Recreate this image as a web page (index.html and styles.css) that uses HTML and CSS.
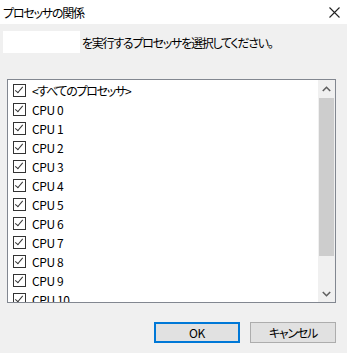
FILE: index.html
```html
<!DOCTYPE html>
<html lang="ja">
  <head>
    <meta charset="UTF-8" />
    <title>プロセッサの関係</title>
    <link rel="stylesheet" href="styles.css">
  </head>
  <body>
    <div class="dialog">
      <div class="title_bar">
        <span class="title">プロセッサの関係</span>
        <span class="close_btn">
          <svg width="11" height="11" viewBox="0 0 11 11"><path d="M0.5 0.5 L10.5 10.5 M10.5 0.5 L0.5 10.5" stroke="#222" stroke-width="1.1" fill="none"/></svg>
        </span>
      </div>

      <div class="prompt_row">
        <div class="name_box"></div>
        <span class="prompt_text">を実行するプロセッサを選択してください。</span>
      </div>

      <div class="list_box">
        <div class="list_items">
          <div class="list_item all_item"><span class="check_box"></span>&lt;すべてのプロセッサ&gt;</div>
          <div class="list_item"><span class="check_box"></span>CPU 0</div>
          <div class="list_item"><span class="check_box"></span>CPU 1</div>
          <div class="list_item"><span class="check_box"></span>CPU 2</div>
          <div class="list_item"><span class="check_box"></span>CPU 3</div>
          <div class="list_item"><span class="check_box"></span>CPU 4</div>
          <div class="list_item"><span class="check_box"></span>CPU 5</div>
          <div class="list_item"><span class="check_box"></span>CPU 6</div>
          <div class="list_item"><span class="check_box"></span>CPU 7</div>
          <div class="list_item"><span class="check_box"></span>CPU 8</div>
          <div class="list_item"><span class="check_box"></span>CPU 9</div>
          <div class="list_item"><span class="check_box"></span>CPU 10</div>
        </div>
        <div class="scroll_bar">
          <div class="scroll_arrow">
            <svg width="9" height="6" viewBox="0 0 9 6"><path d="M0.8 5 L4.5 1.3 L8.2 5" stroke="#606060" stroke-width="1.6" fill="none"/></svg>
          </div>
          <div class="scroll_track"><div class="scroll_thumb"></div></div>
          <div class="scroll_arrow">
            <svg width="9" height="6" viewBox="0 0 9 6"><path d="M0.8 1 L4.5 4.7 L8.2 1" stroke="#606060" stroke-width="1.6" fill="none"/></svg>
          </div>
        </div>
      </div>

      <div class="button_row">
        <button class="btn btn_ok">OK</button>
        <button class="btn btn_cancel">キャンセル</button>
      </div>
    </div>
  </body>
</html>
```

FILE: styles.css
```css
html, body {
  margin: 0;
  padding: 0;
  background-color: #f0f0f0;
}
body {
  font-family: "Noto Sans CJK JP", "Noto Sans", sans-serif;
  font-size: 12px;
  font-feature-settings: "palt";
  color: #000;
}
.dialog {
  width: 347px;
  height: 353px;
}
.title_bar {
  height: 24px;
  background-color: #fff;
  display: flex;
  align-items: center;
  justify-content: space-between;
  padding: 0 7px 0 3px;
}
.title {
  font-size: 12px;
  letter-spacing: -1.2px;
}
.close_btn {
  display: flex;
}
.prompt_row {
  display: flex;
  align-items: center;
  margin-top: 7px;
  padding-left: 3px;
}
.name_box {
  width: 77px;
  height: 22px;
  background-color: #fff;
}
.prompt_text {
  margin-left: 2px;
  letter-spacing: -1.25px;
}
.list_box {
  margin: 26px 0 0 7px;
  width: 327px;
  height: 222px;
  border: 1px solid #828790;
  background-color: #fff;
  display: flex;
  overflow: hidden;
}
.list_items {
  flex: 1;
  padding: 1px 0 0 5px;
}
.list_item {
  height: 19px;
  display: flex;
  align-items: center;
  white-space: nowrap;
  letter-spacing: -0.4px;
}
.all_item {
  letter-spacing: -1.3px;
}
.check_box {
  width: 11px;
  height: 11px;
  border: 1px solid #333;
  margin-right: 6px;
  position: relative;
  flex-shrink: 0;
}
.check_box::after {
  content: "";
  position: absolute;
  left: 3px;
  top: 0px;
  width: 3px;
  height: 7px;
  border-right: 1.5px solid #333;
  border-bottom: 1.5px solid #333;
  transform: rotate(40deg);
}
.scroll_bar {
  width: 17px;
  display: flex;
  flex-direction: column;
  background-color: #f0f0f0;
}
.scroll_arrow {
  height: 17px;
  display: flex;
  align-items: center;
  justify-content: center;
}
.scroll_track {
  flex: 1;
  padding: 1px 1px 0 1px;
}
.scroll_thumb {
  height: 158px;
  background-color: #cdcdcd;
}
.button_row {
  display: flex;
  gap: 10px;
  margin-top: 19px;
  padding-left: 154px;
}
.btn {
  width: 86px;
  height: 21px;
  font-family: "Noto Sans CJK JP", sans-serif;
  font-size: 12px;
  font-feature-settings: "palt";
  letter-spacing: -0.4px;
  background-color: #e1e1e1;
  border: 1px solid #adadad;
  padding: 0;
}
.btn_ok {
  border: 2px solid #0078d7;
}
.btn_cancel {
  letter-spacing: -1.2px;
}
```
